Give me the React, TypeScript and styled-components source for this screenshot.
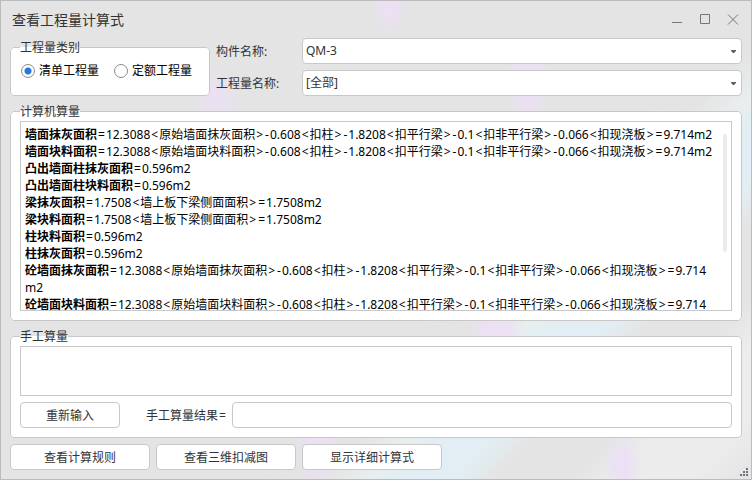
import React from "react";
import styled, { createGlobalStyle } from "styled-components";

const line = "#c8c8c8";
const ink = "#333333";

const GlobalStyle = createGlobalStyle`
  *, *::before, *::after { box-sizing: border-box; }
  body {
    margin: 0;
    font: 12px/18px "Noto Sans", "Noto Sans CJK SC", sans-serif;
    color: ${ink};
  }
  button, input, select, textarea { font: inherit; color: inherit; }
`;

const Window = styled.main`
  position: relative;
  display: flex;
  flex-direction: column;
  min-height: 100vh;
  border: 1px solid #bcbcbc;
  background-color: #e4e4e4;
  background-image:
    radial-gradient(ellipse 26px 30px at 28.7% 20%, #ebe0f4 10%, transparent),
    radial-gradient(ellipse 18px 34px at 51.8% 0%, #ebe0f4 40%, transparent),
    radial-gradient(ellipse 22px 48px at 70.2% 17%, #ebe0f4 30%, transparent),
    radial-gradient(ellipse 28px 36px at 66% 69%, #ebe0f4 40%, transparent),
    radial-gradient(ellipse 24px 36px at 42.3% 94%, #ebe0f4 40%, transparent),
    radial-gradient(ellipse 20px 30px at 82.8% 97%, #ebe0f4 30%, transparent),
    linear-gradient(135deg,
      #e4e4e4 0 60%, #e5e3e3 64%, #e4e4e4 65%, #e9eeef 69%, #e2eef3 71%,
      #e2eef3 76%, #e4e4e4 79%, #e4e4e4 85%, #ececec 89%, #ececec 95%, #e4e4e4);
`;

const TitleBar = styled.header`
  display: flex;
  align-items: center;
  justify-content: space-between;
  height: 37px;
  padding: 0 4px 0 11px;
`;

const Title = styled.h1`
  margin: 0;
  font-size: 14px;
  line-height: 20px;
  font-weight: 400;
`;

const WindowButtons = styled.div`
  display: flex;
`;

const WindowButton = styled.button`
  display: flex;
  width: 28px;
  height: 28px;
  align-items: center;
  justify-content: center;
  padding: 0;
  border: 0;
  background: none;
  color: #777777;
`;

const Body = styled.form`
  flex: 1;
  display: flex;
  flex-direction: column;
  gap: 6px;
  padding: 0 9px 9px;
`;

const TopRow = styled.div`
  display: flex;
  gap: 6px;
`;

const Group = styled.fieldset`
  display: flex;
  flex-direction: column;
  min-width: 0;
  margin: 0;
  padding: 0 9px 9px;
  border: 1px solid ${line};
  border-radius: 4px;
  background: #ffffff;
`;

const CategoryGroup = styled(Group)`
  flex: 0 0 200px;
  padding: 2px 9px 0;
`;

const ComputedGroup = styled(Group)`
  flex: 1;
`;

const Legend = styled.legend`
  padding: 0;
  line-height: 19px;
`;

const RadioRow = styled.div`
  display: flex;
  align-items: center;
  gap: 15px;
  height: 24px;
  padding: 0 1px;
`;

const RadioLabel = styled.label`
  display: flex;
  align-items: center;
  gap: 4px;
  color: #000000;
`;

const Radio = styled.input`
  appearance: none;
  width: 14px;
  height: 14px;
  margin: 0;
  border: 1px solid #8c8c8c;
  border-radius: 50%;
  background: #ffffff;
  &:checked {
    background: radial-gradient(circle, #2379e0 0 3px, #ffffff 4px);
  }
`;

const Fields = styled.div`
  flex: 1;
  display: grid;
  grid-template-columns: 80px 1fr;
  grid-template-rows: 26px 26px;
  align-items: center;
  gap: 6px;
`;

const FieldLabel = styled.label`
  padding-top: 2px;
`;

const SelectBox = styled.div`
  display: grid;
  align-items: center;
  > * { grid-area: 1 / 1; }
  > svg { justify-self: end; margin-right: 6px; pointer-events: none; }
`;

const Select = styled.select`
  appearance: none;
  width: 100%;
  height: 26px;
  padding: 0 20px 0 3px;
  border: 1px solid ${line};
  border-radius: 4px;
  background: #ffffff;
`;

const Output = styled.div`
  position: relative;
  flex: 1 1 0;
  min-height: 190px;
  overflow: hidden;
  padding: 4px 14px 0 4px;
  border: 1px solid ${line};
  color: #000000;
  line-height: 17px;
`;

const Formula = styled.p`
  margin: 0;
`;

const Operator = styled.span`
  padding: 0 1px;
`;

const ScrollThumb = styled.span`
  position: absolute;
  top: 12px;
  right: 4px;
  width: 4px;
  height: 118px;
  border-radius: 2px;
  background: #ebebeb;
`;

const ManualText = styled.textarea`
  display: block;
  height: 50px;
  padding: 4px;
  border: 1px solid ${line};
  border-radius: 0;
  resize: none;
`;

const ManualRow = styled.div`
  display: flex;
  align-items: center;
  margin-top: 6px;
`;

const Button = styled.button<{ $width: number }>`
  width: ${(p) => p.$width}px;
  height: 26px;
  padding: 2px 0 0;
  border: 1px solid ${line};
  border-radius: 4px;
  background: #ffffff;
`;

const ResultLabel = styled(FieldLabel)`
  width: 86px;
  margin-left: 26px;
  white-space: nowrap;
`;

const ResultInput = styled.input`
  flex: 1;
  min-width: 0;
  height: 26px;
  padding: 0 4px;
  border: 1px solid ${line};
  border-radius: 4px;
  background: #ffffff;
`;

const Footer = styled.footer`
  display: flex;
  gap: 6px;
`;

const Grip = styled.svg`
  position: absolute;
  right: 3px;
  bottom: 3px;
`;

const wall = (kind: string) =>
  `12.3088<原始墙面${kind}面积>-0.608<扣柱>-1.8208<扣平行梁>-0.1<扣非平行梁>-0.066<扣现浇板>=9.714`;

const formulas = [
  { name: "墙面抹灰面积", value: wall("抹灰") },
  { name: "墙面块料面积", value: wall("块料") },
  { name: "凸出墙面柱抹灰面积", value: "0.596" },
  { name: "凸出墙面柱块料面积", value: "0.596" },
  { name: "梁抹灰面积", value: "1.7508<墙上板下梁侧面面积>=1.7508" },
  { name: "梁块料面积", value: "1.7508<墙上板下梁侧面面积>=1.7508" },
  { name: "柱块料面积", value: "0.596" },
  { name: "柱抹灰面积", value: "0.596" },
  { name: "砼墙面抹灰面积", value: wall("抹灰") },
  { name: "砼墙面块料面积", value: wall("块料") },
];

function Expression({ text }: { text: string }) {
  return (
    <>
      {text
        .split(/([<>=-])/)
        .map((part, i) => (i % 2 ? <Operator key={i}>{part}</Operator> : part))}
    </>
  );
}

function DropDown({ id, value }: { id: string; value: string }) {
  return (
    <SelectBox>
      <Select id={id} defaultValue={value}>
        <option>{value}</option>
      </Select>
      <svg width="5" height="3" viewBox="0 0 5 3">
        <path d="M0 0h5v1L3 3H2L0 1z" fill="#5a6070" />
      </svg>
    </SelectBox>
  );
}

export default function App() {
  return (
    <Window>
      <GlobalStyle />
      <TitleBar>
        <Title>查看工程量计算式</Title>
        <WindowButtons>
          <WindowButton type="button" aria-label="最小化">
            <svg width="12" height="12" viewBox="0 0 12 12">
              <path d="M1 8.5h10" stroke="currentColor" />
            </svg>
          </WindowButton>
          <WindowButton type="button" aria-label="最大化">
            <svg width="12" height="12" viewBox="0 0 12 12">
              <path d="M1.5 .5h9v9h-9z" fill="none" stroke="currentColor" />
            </svg>
          </WindowButton>
          <WindowButton type="button" aria-label="关闭">
            <svg width="12" height="12" viewBox="0 0 12 12">
              <path d="M1 .5l10 10M11 .5L1 10.5" stroke="currentColor" />
            </svg>
          </WindowButton>
        </WindowButtons>
      </TitleBar>
      <Body onSubmit={(e) => e.preventDefault()}>
        <TopRow>
          <CategoryGroup>
            <Legend>工程量类别</Legend>
            <RadioRow>
              <RadioLabel>
                <Radio type="radio" name="category" defaultChecked />
                清单工程量
              </RadioLabel>
              <RadioLabel>
                <Radio type="radio" name="category" />
                定额工程量
              </RadioLabel>
            </RadioRow>
          </CategoryGroup>
          <Fields>
            <FieldLabel htmlFor="component">构件名称:</FieldLabel>
            <DropDown id="component" value="QM-3" />
            <FieldLabel htmlFor="quantity">工程量名称:</FieldLabel>
            <DropDown id="quantity" value="[全部]" />
          </Fields>
        </TopRow>
        <ComputedGroup>
          <Legend>计算机算量</Legend>
          <Output>
            {formulas.map((f) => (
              <Formula key={f.name}>
                <b>{f.name}</b>
                <Expression text={`=${f.value}`} />
                <wbr />
                m2
              </Formula>
            ))}
            <ScrollThumb />
          </Output>
        </ComputedGroup>
        <Group>
          <Legend>手工算量</Legend>
          <ManualText aria-label="手工算量" />
          <ManualRow>
            <Button type="button" $width={100}>重新输入</Button>
            <ResultLabel htmlFor="result">
              <Expression text="手工算量结果=" />
            </ResultLabel>
            <ResultInput id="result" type="text" />
          </ManualRow>
        </Group>
        <Footer>
          <Button type="button" $width={140}>查看计算规则</Button>
          <Button type="button" $width={140}>查看三维扣减图</Button>
          <Button type="button" $width={140}>显示详细计算式</Button>
        </Footer>
      </Body>
      <Grip width="8" height="8" viewBox="0 0 8 8" aria-hidden="true">
        <path d="M6 0h2v2H6zM3 3h2v2H3zM6 3h2v2H6zM0 6h2v2H0zM3 6h2v2H3zM6 6h2v2H6z" fill="#6b7280" />
      </Grip>
    </Window>
  );
}
